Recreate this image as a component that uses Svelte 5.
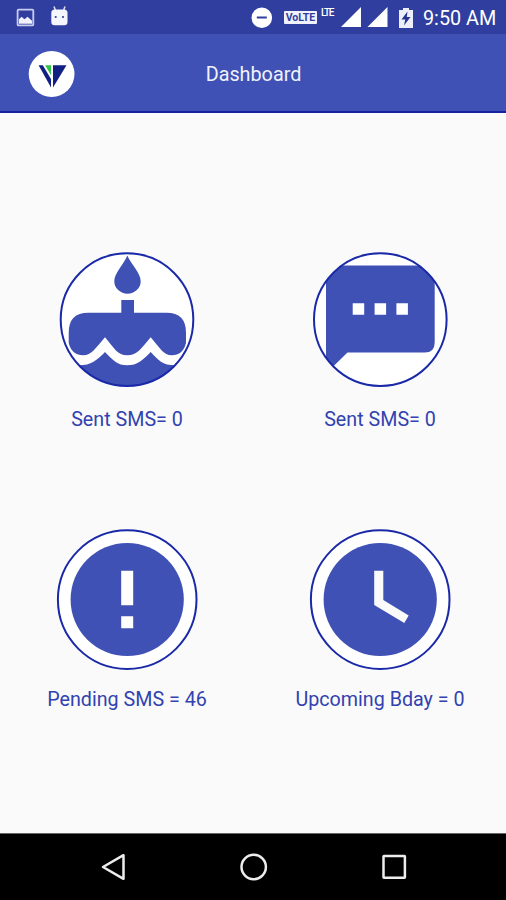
<script lang="ts">
	type Tile = {
		icon: 'cake' | 'message' | 'alert' | 'clock';
		label: string;
	};

	const tiles: Tile[] = [
		{ icon: 'cake', label: 'Sent SMS= 0' },
		{ icon: 'message', label: 'Sent SMS= 0' },
		{ icon: 'alert', label: 'Pending SMS = 46' },
		{ icon: 'clock', label: 'Upcoming Bday = 0' }
	];
</script>

<svelte:head>
	<title>Dashboard</title>
</svelte:head>

<div class="screen">
	<div class="status-bar">
		<svg class="notifications" width="60" height="34" viewBox="14 0 60 34">
			<rect x="17.6" y="9.7" width="15.7" height="15.7" rx="1" fill="none" stroke="#c9cdec" stroke-width="1.8" />
			<path d="M19 23.8v-4.5l2.500-2.500 3 2.500 3-2.500 4.500 4v3z" fill="#f0f1fb" />
			<path d="M54 6.500l1.500 4M65 6.500l-1.500 4" stroke="#dfe2f5" stroke-width="1.5" />
			<path d="M51.3 13q0-3.500 3.500-3.500h9.200q3.500 0 3.500 3.500v9q0 3.300-3.300 3.300h-9.600q-3.300 0-3.300-3.300z" fill="#f5f6fd" />
			<circle cx="55.7" cy="17" r="1.1" fill="#303f9f" />
			<circle cx="63" cy="17" r="1.1" fill="#303f9f" />
		</svg>
		<div class="system">
			<svg width="22" height="22" viewBox="0 0 22 22">
				<circle cx="10.8" cy="10.8" r="10.3" fill="#fff" />
				<path d="M5.800 10.500h10" stroke="#303f9f" stroke-width="2" />
			</svg>
			<span class="volte">VoLTE</span>
			<span class="lte">LTE</span>
			<svg class="signal" width="48" height="20" viewBox="0 0 48 20">
				<path d="M0 20L20 0v20zM26.500 20L46.500 0v20z" fill="#fff" />
			</svg>
			<svg class="battery" width="14" height="20" viewBox="0 0 14 20">
				<path d="M4 0h6v2h4v18H0V2h4z" fill="#eceefa" />
				<path d="M8.500 3.500L2.500 11.500h3.700L5 17.500 11.500 9H7.800z" fill="#26348f" />
			</svg>
			<span class="time">9:50 AM</span>
		</div>
	</div>

	<header class="app-bar">
		<svg class="logo" width="48" height="48" viewBox="0 0 48 48">
			<circle cx="24.6" cy="24" r="22.9" fill="#fff" />
			<path d="M11.600 15.200h4.200L24 29v8.500z" fill="#122083" />
			<path d="M18.200 15.200H24v10z" fill="#2fc645" />
			<path d="M26 15.200H39.500L26 37.500z" fill="#122083" />
		</svg>
		<h1>Dashboard</h1>
	</header>

	<main>
		{#each tiles as { icon, label }}
			<div class="tile">
				{#if icon === 'cake'}
					<svg width="144" height="144" viewBox="-2 -2 144 144">
						<clipPath id="cake-clip"><circle cx="70" cy="69.6" r="66.5" /></clipPath>
						<circle class="disc" cx="70" cy="69.6" r="66.3" />
						<g class="shape" clip-path="url(#cake-clip)">
							<path d="M70.300 5.500C74 14 83.700 23 83.700 31.200a13.200 12.500 0 0 1-26.400 0C57.300 23 67 14 70.300 5.500z" />
							<path d="M64.300 50H77v12.700h32.500q19.500 0 19.500 20V93q-3 12.300-14.300 12.300c-8 0-11.500-7-21-18-9.500 11-13.400 18-23.400 18s-12.800-7-22.300-18c-9.500 11-13.700 18-21.700 18Q14.700 105.300 11.700 93V82.700q0-20 19.500-20h33.100z" />
							<path d="M22 115.300c12 0 18-5 26-13.300 8 8.300 12.300 13.300 22.300 13.300s15.400-5 23.400-13.300c8 8.300 11 13.300 25 13.300V140H22z" />
						</g>
						<circle class="ring" cx="70" cy="69.6" r="66.3" />
					</svg>
				{:else if icon === 'message'}
					<svg width="144" height="144" viewBox="-2 -2 144 144">
						<clipPath id="message-clip"><circle cx="70.3" cy="69.6" r="66.5" /></clipPath>
						<circle class="disc" cx="70.3" cy="69.6" r="66.3" />
						<g clip-path="url(#message-clip)">
							<path class="shape" d="M26 15.500h88.700q10 0 10 10v67q0 10-10 10H37.500L16 123.500v-98q0-10 10-10z" />
							<path d="M42.700 53.200h11.500v11.500H42.700zM64.600 53.200h11.500v11.500H64.600zM86.400 53.200h11.500v11.500H86.400z" fill="#fff" />
						</g>
						<circle class="ring" cx="70.3" cy="69.6" r="66.3" />
					</svg>
				{:else if icon === 'alert'}
					<svg width="144" height="144" viewBox="0 0 144 144">
						<circle class="disc ring" cx="72.2" cy="71.6" r="69.3" />
						<circle class="shape" cx="72.2" cy="71.5" r="56.6" />
						<path d="M66.200 42.800h12v34.400h-12zM66.200 88.200h12v12h-12z" fill="#fff" />
					</svg>
				{:else}
					<svg width="144" height="144" viewBox="0 0 144 144">
						<circle class="disc ring" cx="72.2" cy="71.6" r="69.3" />
						<circle class="shape" cx="72.2" cy="71.5" r="56.6" />
						<path d="M66.200 42.800h9.100v29.200l25.400 15.400-4.400 7.600-30.100-18z" fill="#fafafa" />
					</svg>
				{/if}
				<p>{label}</p>
			</div>
		{/each}
	</main>

	<nav>
		<svg width="28" height="32" viewBox="0 0 28 32">
			<path d="M3 16L23.500 4.200v23.600z" />
		</svg>
		<svg width="28" height="32" viewBox="0 0 28 32">
			<circle cx="13.7" cy="16" r="12.2" />
		</svg>
		<svg width="28" height="32" viewBox="0 0 28 32">
			<rect x="3.5" y="5" width="21.4" height="21.7" rx="0.5" />
		</svg>
	</nav>
</div>

<style>
	:global(body) {
		margin: 0;
	}

	.screen {
		display: flex;
		flex-direction: column;
		width: 506px;
		height: 900px;
		background-color: #fafafa;
		font-family: Roboto, sans-serif;
		overflow: hidden;
	}

	svg {
		display: block;
		flex: none;
	}

	.status-bar {
		display: flex;
		justify-content: space-between;
		height: 34px;
		padding: 0 11px 0 14px;
		background-color: #303f9f;
	}

	.system {
		display: flex;
		align-items: center;
		padding-top: 1px;
		color: #fff;
	}

	.volte {
		box-sizing: border-box;
		width: 33px;
		height: 13px;
		margin-left: 11px;
		border-radius: 1px;
		background-color: #f0f1fb;
		color: #303f9f;
		font-size: 10.5px;
		font-weight: 700;
		line-height: 13px;
		text-align: center;
	}

	.lte {
		width: 12px;
		margin: -10px 0 0 4px;
		font-size: 10px;
		font-weight: 500;
		line-height: 12px;
		letter-spacing: -1.3px;
	}

	.signal {
		margin: -1px 0 0 8px;
	}

	.battery {
		margin: 0 10px 0 10px;
	}

	.time {
		width: 72px;
		padding-top: 2px;
		font-size: 19.8px;
		line-height: 24px;
		white-space: nowrap;
	}

	.app-bar {
		display: grid;
		grid-template-columns: 48px 1fr 48px;
		align-items: center;
		box-sizing: border-box;
		height: 79px;
		padding: 0 27px;
		border-bottom: 2px solid #1422a0;
		background-color: #3f51b5;
	}

	.logo {
		margin-top: 2px;
	}

	h1 {
		margin: 5px 0 0 1px;
		color: #f1f2fb;
		font-size: 19.8px;
		font-weight: 400;
		line-height: 24px;
		text-align: center;
	}

	main {
		display: grid;
		grid-template-columns: 253px 253px;
		grid-template-rows: 280px 280px;
		flex: 1;
		padding-top: 135px;
	}

	.tile {
		display: flex;
		flex-direction: column;
		align-items: center;
		padding-left: 1px;
	}

	.tile p {
		margin: 16px 0 0;
		color: #3242b0;
		font-size: 19.7px;
		line-height: 24px;
		white-space: nowrap;
	}

	.disc {
		fill: #fff;
	}

	.ring {
		stroke: #1a29a8;
		stroke-width: 2;
	}

	.ring:not(.disc) {
		fill: none;
	}

	.shape {
		fill: #3f51b5;
	}

	nav {
		display: flex;
		justify-content: space-between;
		align-items: center;
		box-sizing: border-box;
		height: 67px;
		padding: 0 98px 0 100px;
		border-top: 1px solid #666;
		background-color: #000;
	}

	nav path,
	nav circle,
	nav rect {
		fill: none;
		stroke: #ededed;
		stroke-width: 2.5;
		stroke-linejoin: round;
	}
</style>
